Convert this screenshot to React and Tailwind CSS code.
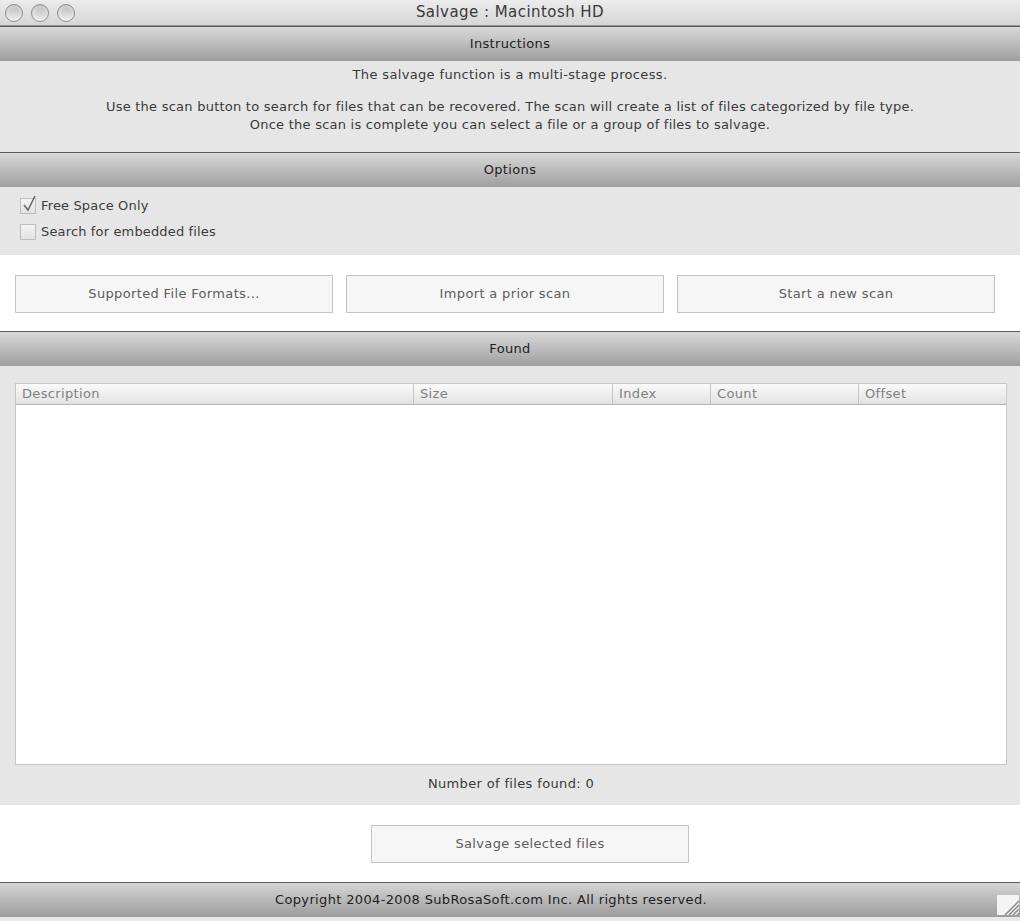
import React from 'react'

const font = { fontFamily: '"DejaVu Sans", "Liberation Sans", sans-serif' }

const HeaderBar = ({ title }) => (
  <div className="h-[35px] flex items-center justify-center border-t border-[#5a5a5a] bg-gradient-to-b from-[#d9d9d9] via-[#bcbcbc] to-[#9e9e9e] text-[13px] tracking-[0.35px] text-[#1e1e1e]">
    {title}
  </div>
)

const Light = () => (
  <div className="w-[18px] h-[18px] rounded-full border border-[#8f8f8f] bg-gradient-to-b from-[#c8c8c8] to-[#f2f2f2] flex items-center justify-center">
    <div className="w-[11px] h-[11px] rounded-full bg-gradient-to-b from-[#c4c4c4] to-[#e8e8e8]" />
  </div>
)

const Button = ({ label, className = '' }) => (
  <div className={`h-[38px] flex items-center justify-center border border-[#c4c4c4] bg-[#f6f6f6] text-[13px] tracking-[0.35px] text-[#5c5c5c] ${className}`}>
    {label}
  </div>
)

const Checkbox = ({ checked, label }) => (
  <div className="flex items-center gap-[5px] h-[26px]">
    <div className="relative w-[16px] h-[16px] border border-[#bdbdbd] bg-gradient-to-b from-[#f4f4f4] to-[#e2e2e2]">
      {checked && (
        <svg className="absolute -top-[4px] left-[1px]" width="16" height="18" viewBox="0 0 16 18">
          <path d="M2 10 L6 15 L13 1" fill="none" stroke="#6a6a6a" strokeWidth="1.6" />
        </svg>
      )}
    </div>
    <span className="text-[13px] tracking-[0.15px] text-[#3c3c3c]">{label}</span>
  </div>
)

const columns = [
  { name: 'Description', w: 'w-[398px]' },
  { name: 'Size', w: 'w-[199px]' },
  { name: 'Index', w: 'w-[98px]' },
  { name: 'Count', w: 'w-[148px]' },
  { name: 'Offset', w: 'flex-1' },
]

const App = () => {
  return (
    <div style={font} className="w-[1020px] h-[921px] bg-[#e6e6e6] flex flex-col overflow-hidden">
      {/* Title bar */}
      <div className="h-[26px] relative flex items-center justify-center bg-gradient-to-b from-[#ececec] to-[#d6d6d6] border-b border-[#9a9a9a]">
        <div className="absolute left-[5px] top-[4px] flex gap-[8px]">
          <Light />
          <Light />
          <Light />
        </div>
        <span className="text-[15px] tracking-[0.45px] text-[#3a3a3a]">Salvage : Macintosh HD</span>
      </div>

      <HeaderBar title="Instructions" />
      <div className="h-[91px] bg-[#e6e6e6] flex flex-col items-center text-[13px] tracking-[0.35px] text-[#3a3a3a] pt-[4px]">
        <p>The salvage function is a multi-stage process.</p>
        <p className="mt-[13px] text-center leading-[18px] tracking-[0.24px]">
          Use the scan button to search for files that can be recovered. The scan will create a list of files categorized by file type.
          <br />
          Once the scan is complete you can select a file or a group of files to salvage.
        </p>
      </div>

      <HeaderBar title="Options" />
      <div className="h-[68px] bg-[#e6e6e6] px-[20px] pt-[6px]">
        <Checkbox checked label="Free Space Only" />
        <Checkbox label="Search for embedded files" />
      </div>

      <div className="h-[76px] bg-white flex items-center gap-[13px] px-[15px] pt-[2px]">
        <Button label="Supported File Formats..." className="w-[318px]" />
        <Button label="Import a prior scan" className="w-[318px]" />
        <Button label="Start a new scan" className="w-[318px]" />
      </div>

      <HeaderBar title="Found" />
      <div className="h-[439px] bg-[#e6e6e6] pl-[15px] pr-[13px] pt-[17px] flex flex-col">
        <div className="h-[382px] bg-white border border-[#c8c8c8] flex flex-col">
          <div className="h-[21px] flex bg-gradient-to-b from-[#fafafa] via-[#eeeeee] to-[#e2e2e2] border-b border-[#b5b5b5] text-[13px] tracking-[0.35px] text-[#808080]">
            {columns.map((c, i) => (
              <div
                key={c.name}
                className={`${c.w} flex items-center px-[6px] ${i < columns.length - 1 ? 'border-r border-[#c4c4c4]' : ''}`}
              >
                {c.name}
              </div>
            ))}
          </div>
        </div>
        <p className="text-center text-[13px] tracking-[0.35px] text-[#3a3a3a] mt-[9px]">Number of files found: 0</p>
      </div>

      <div className="h-[77px] bg-white flex items-center justify-center pl-[40px]">
        <Button label="Salvage selected files" className="w-[318px]" />
      </div>

      <div className="h-[35px] relative flex items-center bg-gradient-to-b from-[#d6d6d6] via-[#b8b8b8] to-[#9c9c9c] border-t border-[#5a5a5a]">
        <span className="ml-[275px] text-[13px] tracking-[0.35px] text-[#1e1e1e]">Copyright 2004-2008 SubRosaSoft.com Inc. All rights reserved.</span>
        <div className="absolute right-[1px] bottom-[2px] w-[22px] h-[20px] bg-[#f4f4f4]">
          <svg width="22" height="20" viewBox="0 0 22 20">
            <path d="M8 20 L22 6 M12 20 L22 10 M16 20 L22 14 M20 20 L22 18" stroke="#8a8a8a" strokeWidth="1.5" />
          </svg>
        </div>
      </div>
      <div className="flex-1 bg-[#e9e9e9]" />
    </div>
  )
}

export default App
